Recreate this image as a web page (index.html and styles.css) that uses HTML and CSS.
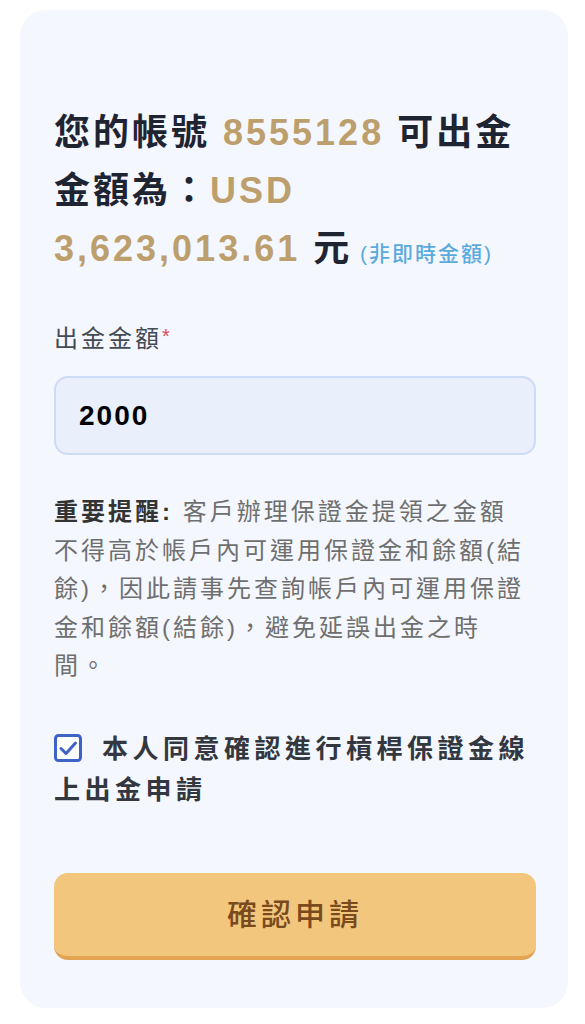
FILE: index.html
```html
<!DOCTYPE html>
<html lang="zh-Hant">
<head>
<meta charset="utf-8">
<title>出金申請</title>
<link rel="stylesheet" href="styles.css">
</head>
<body>
<main class="card">
  <h1 class="title">您的帳號 <span class="gold">8555128</span> 可出金金額為：<span class="gold">USD 3,623,013.61</span> 元<span class="note"> (非即時金額)</span></h1>

  <div class="field">
    <label class="field-label" for="amount">出金金額<span class="req">*</span></label>
    <input class="field-input" id="amount" type="text" value="2000">
  </div>

  <p class="reminder"><strong class="reminder-head">重要提醒:</strong> 客戶辦理保證金提領之金額不得高於帳戶內可運用保證金和餘額(結餘)，因此請事先查詢帳戶內可運用保證金和餘額(結餘)，避免延誤出金之時間。</p>

  <label class="agree">
    <span class="checkbox">
      <svg viewBox="0 0 28 28" width="28" height="28" aria-hidden="true">
        <rect x="1.5" y="1.5" width="25" height="25" rx="3" ry="3" fill="#ffffff" stroke="#3f62c8" stroke-width="3"/>
        <path d="M7 14.5 L12 19.5 L21.5 9" fill="none" stroke="#3f62c8" stroke-width="3" stroke-linecap="round" stroke-linejoin="round"/>
      </svg>
    </span>本人同意確認進行槓桿保證金線上出金申請</label>

  <button class="submit" type="button">確認申請</button>
</main>
</body>
</html>
```

FILE: styles.css
```css
html, body {
  margin: 0;
  padding: 0;
  background: #ffffff;
}

body {
  font-family: "Liberation Sans", "Noto Sans CJK TC", sans-serif;
  color: #1f2433;
}

.card {
  box-sizing: border-box;
  width: 548px;
  margin: 10px 0 17px 20px;
  padding: 94px 32px 48px 34px;
  background: #f4f7fd;
  border-radius: 26px;
}

.title {
  margin: 0;
  font-size: 36px;
  line-height: 58px;
  font-weight: 700;
  letter-spacing: 3px;
  color: #1f2433;
}

.gold {
  color: #bd9f6d;
}

.note {
  font-size: 21px;
  font-weight: 500;
  letter-spacing: 2px;
  color: #5aaade;
}

.field {
  margin-top: 38px;
  display: flex;
  flex-direction: column;
  gap: 19px;
}

.field-label {
  font-size: 24px;
  line-height: 36px;
  letter-spacing: 3px;
  color: #454b55;
}

.req {
  color: #e0475f;
  font-size: 20px;
  vertical-align: top;
  line-height: 30px;
  letter-spacing: 0;
}

.field-input {
  box-sizing: border-box;
  width: 100%;
  height: 79px;
  margin: 0;
  padding: 0 23px;
  border: 2px solid #cddcf6;
  border-radius: 14px;
  background: #e9effb;
  font-family: "Liberation Sans", "Noto Sans CJK TC", sans-serif;
  font-size: 28px;
  font-weight: 700;
  letter-spacing: 2px;
  color: #000000;
  outline: none;
}

.reminder {
  margin: 38px 8px 0 0;
  font-size: 24px;
  line-height: 38.5px;
  letter-spacing: 3px;
  color: #6f6f6f;
}

.reminder-head {
  color: #333333;
  font-weight: 700;
}

.agree {
  display: block;
  margin-top: 43px;
  font-size: 26px;
  line-height: 41.5px;
  font-weight: 700;
  letter-spacing: 4.5px;
  color: #333740;
}

.checkbox {
  display: inline-block;
  width: 28px;
  height: 28px;
  margin-right: 20px;
  vertical-align: -4px;
}

.checkbox svg {
  display: block;
}

.submit {
  display: block;
  box-sizing: border-box;
  width: 100%;
  height: 87px;
  margin-top: 61px;
  padding: 0 0 4px;
  border: none;
  border-bottom: 4px solid #e2a352;
  border-radius: 14px;
  background: #f2c67c;
  font-family: "Liberation Sans", "Noto Sans CJK TC", sans-serif;
  font-size: 30px;
  font-weight: 500;
  letter-spacing: 4px;
  color: #7a4a1d;
  cursor: pointer;
}
```
